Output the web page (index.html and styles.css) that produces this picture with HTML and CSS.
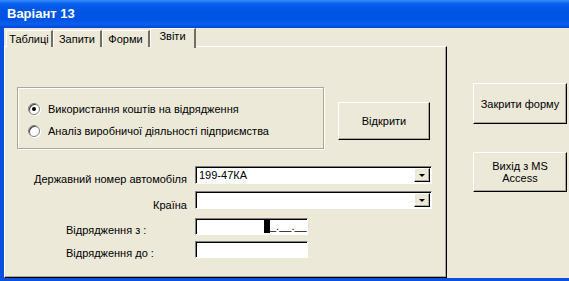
FILE: index.html
```html
<!DOCTYPE html>
<html lang="uk">
<head>
    <meta charset="UTF-8">
    <title>Варіант 13</title>
    <link rel="stylesheet" href="styles.css">
</head>
<body>
    <div class="window">
        <div class="titlebar">Варіант 13</div>
        <div class="frame">
            <div class="main">
                <div class="tabs">
                    <div class="tab">Таблиці</div>
                    <div class="tab">Запити</div>
                    <div class="tab">Форми</div>
                    <div class="tab active">Звіти</div>
                </div>
                <div class="panel">
                    <div class="top-row">
                        <div class="options">
                            <div class="option"><span class="radio checked"></span>Використання коштів на відрядження</div>
                            <div class="option"><span class="radio"></span>Аналіз виробничої діяльності підприємства</div>
                        </div>
                        <div class="btn open">Відкрити</div>
                    </div>
                    <div class="form">
                        <div class="label">Державний номер автомобіля</div>
                        <div class="combo"><span class="value">199-47КА</span><span class="arrow"></span></div>

                        <div class="label">Країна</div>
                        <div class="combo"><span class="value"></span><span class="arrow"></span></div>

                        <div class="label indent">Відрядження з :</div>
                        <div class="textbox mask"><span class="caret"></span>_.__.__</div>

                        <div class="label indent">Відрядження до :</div>
                        <div class="textbox"></div>
                    </div>
                </div>
            </div>
            <div class="side">
                <div class="btn close">Закрити форму</div>
                <div class="btn quit">Вихід з MS<br>Access</div>
            </div>
        </div>
    </div>
</body>
</html>
```

FILE: styles.css
```css
* { margin: 0; padding: 0; box-sizing: border-box; }
body {
    background: #ece9d8;
    font-family: "Liberation Sans", Arial, sans-serif;
    font-size: 11px;
    color: #000;
    overflow: hidden;
}
.window {
    width: 569px;
    height: 281px;
    border-left: 4px solid #0a4fe0;
    border-bottom: 3px solid #0a4fe0;
    background: #ece9d8;
}
.titlebar {
    height: 28px;
    margin-left: -4px;
    padding: 6px 0 0 7px;
    color: #fff;
    font-weight: bold;
    font-size: 13px;
    background: linear-gradient(to bottom, #3a8df7 0%, #0b62ee 12%, #0055e5 35%, #0054e3 70%, #0a5ff0 86%, #0046d2 100%);
}
.frame {
    display: flex;
    height: 250px;
}
.main {
    width: 443px;
    display: flex;
    flex-direction: column;
}
.tabs {
    display: flex;
    height: 18px;
    margin-top: 2px;
    padding-left: 2px;
    position: relative;
    z-index: 1;
}
.tab {
    height: 17px;
    padding-top: 2px;
    text-align: center;
    white-space: nowrap;
    border-left: 1px solid #fff;
    border-top: 1px solid #fff;
    border-right: 2px solid #716f64;
    background: #ece9d8;
}
.tab:nth-child(1) { width: 47px; }
.tab:nth-child(2) { width: 49px; }
.tab:nth-child(3) { width: 48px; }
.tab.active {
    width: 46px;
    height: 20px;
    margin-top: -2px;
    padding-top: 1px;
}
.panel {
    flex: 1;
    margin-top: -2px;
    border-top: 1px solid #fff;
    border-left: 1px solid #fff;
    border-right: 1px solid #000;
    border-bottom: 1px solid #000;
    box-shadow: inset -1px -1px #aca899;
    padding: 40px 0 0 12px;
}
.top-row {
    display: flex;
    align-items: flex-start;
}
.options {
    width: 307px;
    height: 62px;
    border: 1px solid #aca899;
    box-shadow: inset 1px 1px #fff, 1px 1px #fff;
    padding: 14px 0 0 10px;
    display: flex;
    flex-direction: column;
    gap: 9px;
}
.option {
    display: flex;
    align-items: center;
    gap: 8px;
    height: 13px;
}
.radio {
    width: 12px;
    height: 12px;
    border-radius: 50%;
    background: #fff;
    border: 1px solid #808080;
    box-shadow: inset 1px 1px #404040, 1px 1px #fff;
    position: relative;
}
.radio.checked::after {
    content: "";
    position: absolute;
    left: 3px;
    top: 3px;
    width: 4px;
    height: 4px;
    border-radius: 50%;
    background: #000;
}
.btn {
    background: #ece9d8;
    border-top: 1px solid #fff;
    border-left: 1px solid #fff;
    border-right: 1px solid #000;
    border-bottom: 1px solid #000;
    box-shadow: inset -1px -1px #aca899;
    display: flex;
    align-items: center;
    justify-content: center;
    text-align: center;
    line-height: 12px;
}
.btn.open {
    width: 92px;
    height: 38px;
    margin: 15px 0 0 14px;
}
.form {
    display: grid;
    grid-template-columns: 170px auto;
    column-gap: 8px;
    justify-items: start;
    align-items: center;
    margin-top: 17px;
}
.label {
    justify-self: stretch;
    text-align: right;
}
.label.indent {
    text-align: left;
    padding-left: 49px;
}
.combo {
    width: 237px;
    height: 18px;
    margin-bottom: 7px;
    background: #fff;
    border-top: 1px solid #808080;
    border-left: 1px solid #808080;
    border-right: 1px solid #fff;
    border-bottom: 1px solid #fff;
    box-shadow: inset 1px 1px #000;
    display: flex;
    align-items: center;
    padding: 1px 1px 1px 2px;
}
.combo:nth-of-type(4) {
    margin-bottom: 9px;
}
.combo .value {
    flex: 1;
    padding-left: 1px;
}
.arrow {
    width: 16px;
    height: 14px;
    background: #ece9d8;
    border-top: 1px solid #fff;
    border-left: 1px solid #fff;
    border-right: 1px solid #000;
    border-bottom: 1px solid #000;
    box-shadow: inset -1px -1px #aca899;
    position: relative;
}
.arrow::after {
    content: "";
    position: absolute;
    left: 4px;
    top: 5px;
    border-left: 3px solid transparent;
    border-right: 3px solid transparent;
    border-top: 3px solid #000;
}
.textbox {
    width: 113px;
    height: 17px;
    margin-bottom: 6px;
    background: #fff;
    border-top: 1px solid #808080;
    border-left: 1px solid #808080;
    border-right: 1px solid #fff;
    border-bottom: 1px solid #fff;
    box-shadow: inset 1px 1px #000;
}
.textbox.mask {
    display: flex;
    align-items: center;
    padding-left: 68px;
    line-height: 13px;
}
.caret {
    width: 6px;
    height: 13px;
    background: #000;
}
.side {
    flex: 1;
    display: flex;
    flex-direction: column;
    align-items: flex-start;
    padding: 55px 0 0 26px;
    gap: 28px;
}
.btn.close {
    width: 94px;
    height: 41px;
}
.btn.quit {
    width: 94px;
    height: 40px;
}
```
